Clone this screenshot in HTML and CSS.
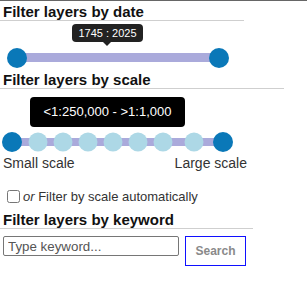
FILE: index.html
```html
<!DOCTYPE html>
<html>
<head>
<meta charset="utf-8">
<link rel="stylesheet" href="styles.css">
</head>
<body>
<div class="panel">
  <h3 class="title title-date">Filter layers by date</h3>
  <div class="slider slider-date">
    <div class="tip tip-date">1745 : 2025</div>
    <div class="rail rail-date">
      <span class="handle" style="left:0%"></span>
      <span class="handle" style="left:100%"></span>
    </div>
  </div>

  <h3 class="title title-scale">Filter layers by scale</h3>
  <div class="slider slider-scale">
    <div class="tip tip-scale">&lt;1:250,000 - &gt;1:1,000</div>
    <div class="rail rail-scale">
      <span class="pip" style="left:0px"></span>
      <span class="pip" style="left:25.5px"></span>
      <span class="pip" style="left:50.5px"></span>
      <span class="pip" style="left:75.5px"></span>
      <span class="pip" style="left:100.5px"></span>
      <span class="pip" style="left:125.5px"></span>
      <span class="pip" style="left:151px"></span>
      <span class="pip" style="left:182px"></span>
      <span class="handle" style="left:0px"></span>
      <span class="handle" style="left:211px"></span>
    </div>
  </div>
  <div class="scale-labels">
    <span>Small scale</span>
    <span>Large scale</span>
  </div>
  <label class="auto-row">
    <input type="checkbox" class="auto-check">
    <span><em>or</em> Filter by scale automatically</span>
  </label>

  <h3 class="title title-keyword">Filter layers by keyword</h3>
  <div class="search-row">
    <input type="text" class="keyword" placeholder="Type keyword...">
    <button class="search-btn">Search</button>
  </div>
</div>
</body>
</html>
```

FILE: styles.css
```css
* { box-sizing: border-box; }
html, body { margin: 0; padding: 0; background: #fff; }
body {
  width: 307px;
  height: 284px;
  overflow: hidden;
  border-top: 1px solid #666;
  font-family: "Liberation Sans", Arial, sans-serif;
  color: #333;
}
.panel { display: flex; flex-direction: column; align-items: flex-start; }

.title {
  margin: 0;
  padding-left: 3px;
  font-size: 15px;
  line-height: 17px;
  font-weight: bold;
  color: #111;
  border-bottom: 1px solid #cfcfcf;
}
.title-date { width: 244px; margin-top: 2px; }
.title-scale { width: 284px; }
.title-keyword { width: 253px; margin-top: 8px; }

.slider { display: flex; flex-direction: column; align-items: flex-start; }
.slider-date { height: 50px; }
.slider-scale { height: 66px; }

.tip {
  position: relative;
  color: #fff;
  text-align: center;
}
.tip-date {
  margin: 3px 0 0 72px;
  width: 71px;
  height: 18px;
  line-height: 18px;
  font-size: 11px;
  background: #222;
  border-radius: 4px;
}
.tip-date::after {
  content: "";
  position: absolute;
  left: 31px;
  top: 18px;
  border-left: 4px solid transparent;
  border-right: 4px solid transparent;
  border-top: 4px solid #222;
}
.tip-scale {
  margin: 8px 0 0 30px;
  width: 155px;
  height: 30px;
  line-height: 30px;
  font-size: 13px;
  background: #000;
  border-radius: 4px;
}

.rail { position: relative; background: #aaaadb; }
.rail-date { margin: 11px 0 0 17px; width: 202px; height: 9px; }
.rail-scale { margin: 11px 0 0 12px; width: 211px; height: 8px; }

.handle, .pip {
  position: absolute;
  top: 50%;
  border-radius: 50%;
  transform: translate(-50%, -50%);
}
.handle { width: 20px; height: 20px; background: #0a78b8; }
.pip { width: 19px; height: 19px; background: #add8e6; }

.scale-labels {
  display: flex;
  justify-content: space-between;
  width: 244px;
  margin-left: 3px;
  font-size: 14px;
  line-height: 16px;
  color: #333;
}

.auto-row {
  display: flex;
  align-items: center;
  height: 13px;
  margin-top: 19px;
  margin-left: 3px;
  font-size: 13px;
  line-height: 15px;
  color: #333;
}
.auto-check { width: 13px; height: 13px; margin: 0 3px 0 4px; }

.search-row {
  display: flex;
  align-items: flex-start;
  gap: 6px;
  margin: 7px 0 0 3px;
}
.keyword {
  width: 176px;
  height: 20px;
  margin: 0;
  padding: 1px 4px;
  border: 1px solid #767676;
  border-radius: 2px;
  font-family: "Liberation Sans", Arial, sans-serif;
  font-size: 13.33px;
  color: #222;
}
.keyword::placeholder { color: #555; }
.search-btn {
  width: 61px;
  height: 30px;
  margin: 0;
  padding: 0;
  background: #fff;
  border: 1px solid #1010ff;
  font-family: "Liberation Sans", Arial, sans-serif;
  font-size: 12px;
  font-weight: bold;
  color: #8a8a8a;
}
```
